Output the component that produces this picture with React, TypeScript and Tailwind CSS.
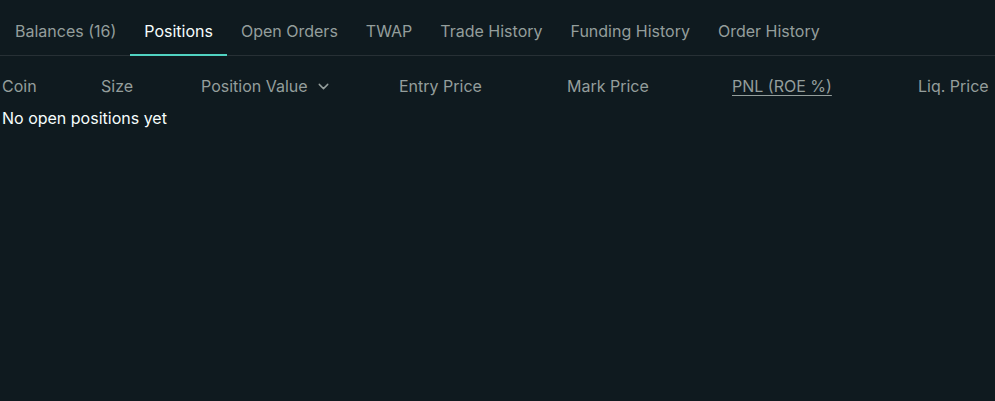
import { ChevronDown } from "lucide-react";

const tabs = [
  "Balances (16)",
  "Positions",
  "Open Orders",
  "TWAP",
  "Trade History",
  "Funding History",
  "Order History",
];

const cols = [
  { label: "Coin", w: "w-[99px]" },
  { label: "Size", w: "w-[100px]" },
  { label: "Position Value", w: "w-[198px]", sort: true },
  { label: "Entry Price", w: "w-[168px]" },
  { label: "Mark Price", w: "w-[165px]" },
  { label: "PNL (ROE %)", w: "w-[186px]", underline: true },
  { label: "Liq. Price", w: "w-[90px]" },
];

export default function App() {
  return (
    <div
      className="w-[995px] h-[401px] overflow-hidden bg-[#0f1a1f] text-[16px]"
      style={{ fontFamily: "Inter, 'Noto Sans', sans-serif" }}
    >
      <div className="flex h-[56px] pl-[1px] border-b border-[#273035]">
        {tabs.map((t) => {
          const active = t === "Positions";
          return (
            <div
              key={t}
              className={
                "relative flex items-center px-[14px] pt-[6px] whitespace-nowrap " +
                (active ? "text-[#f6fefd]" : "text-[#949e9c]")
              }
            >
              {t}
              {active && (
                <span className="absolute left-0 right-0 bottom-[-1px] h-[2px] bg-[#50d2c1]" />
              )}
            </div>
          );
        })}
      </div>

      <div className="flex h-[34px] items-center pl-[2px] mt-[13px] text-[#949e9c] whitespace-nowrap">
        {cols.map((c) => (
          <div key={c.label} className={"flex shrink-0 items-center gap-[7px] " + c.w}>
            <span
              className={
                c.underline
                  ? "underline decoration-[#949e9c] underline-offset-[3px]"
                  : ""
              }
            >
              {c.label}
            </span>
            {c.sort && <ChevronDown size={17} strokeWidth={2} />}
          </div>
        ))}
      </div>

      <div className="pl-[2px] pt-[3px] text-[#f6fefd]">No open positions yet</div>
    </div>
  );
}
